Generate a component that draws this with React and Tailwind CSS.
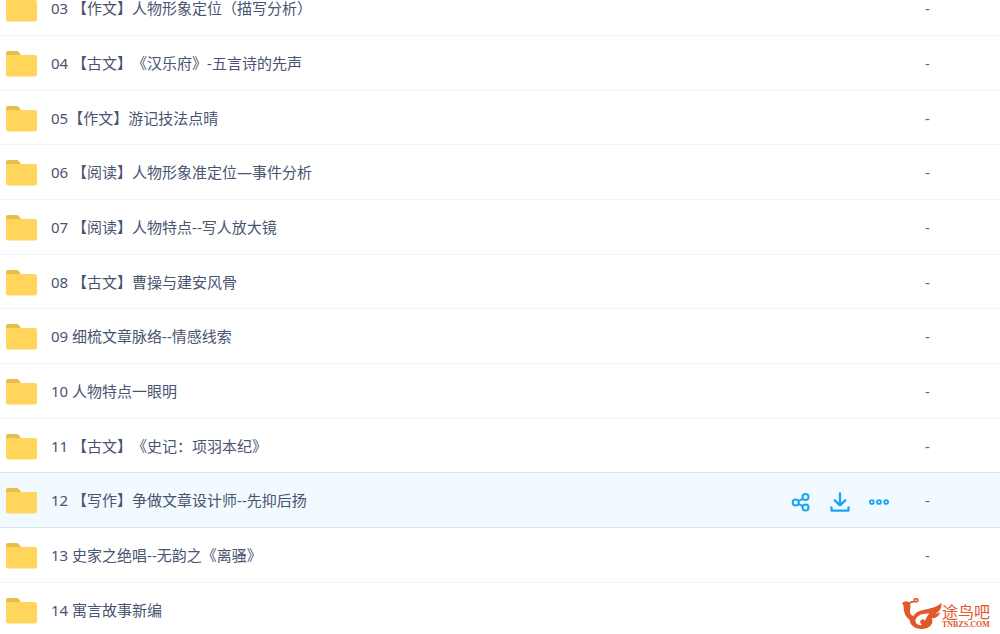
const files = [
  '03 【作文】人物形象定位（描写分析）',
  '04 【古文】《汉乐府》-五言诗的先声',
  '05【作文】游记技法点晴',
  '06 【阅读】人物形象准定位—事件分析',
  '07 【阅读】人物特点--写人放大镜',
  '08 【古文】曹操与建安风骨',
  '09 细梳文章脉络--情感线索',
  '10 人物特点一眼明',
  '11 【古文】《史记：项羽本纪》',
  '12 【写作】争做文章设计师--先抑后扬',
  '13 史家之绝唱--无韵之《离骚》',
  '14 寓言故事新编',
];

const activeIndex = 9;

function FolderIcon() {
  return (
    <svg viewBox="0 -2 31 28" className="h-7 w-[31px] shrink-0" aria-hidden="true">
      <path d="M0 2Q0 0 2 0H10.6Q12 0 12.8 1L14.6 3.6V10H0Z" fill="#e6be50" />
      <path d="M0 4H29Q31 4 31 6V23.500Q31 25.500 29 25.500H2Q0 25.500 0 23.500Z" fill="#ffd65b" />
    </svg>
  );
}

function ShareIcon() {
  return (
    <svg viewBox="0 0 20 20" className="size-5" fill="none" stroke="#19a5f5" strokeWidth="2" aria-hidden="true">
      <circle cx="4.700" cy="10.500" r="3" />
      <circle cx="14.500" cy="5" r="3" />
      <circle cx="14.500" cy="15.500" r="3" />
      <path d="M7.400 9.200 11.900 6.600M7.400 11.800 11.800 14.200" />
    </svg>
  );
}

function DownloadIcon() {
  return (
    <svg viewBox="0 0 20 20" className="size-5" fill="none" stroke="#19a5f5" strokeWidth="2.300" strokeLinecap="round" strokeLinejoin="round" aria-hidden="true">
      <path d="M10 1.300V13M4.800 8.300 10 13.300 15.200 8.300M1.500 15.500V18.600H18.500V15.500" />
    </svg>
  );
}

function MoreIcon() {
  return (
    <svg viewBox="0 0 20 20" className="size-5" fill="none" stroke="#19a5f5" strokeWidth="1.900" aria-hidden="true">
      <circle cx="2.800" cy="10" r="1.900" />
      <circle cx="10" cy="10" r="1.900" />
      <circle cx="17.200" cy="10" r="1.900" />
    </svg>
  );
}

function BirdLogo() {
  return (
    <svg viewBox="0 0 120 96" className="h-8 w-10" aria-hidden="true">
      <path
        fill="#e2572b"
        d="M0 17C5 10 13 8 20 12C28 17 25 28 24 38C23 46 27 51 34 54C42 42 52 38 66 35C86 31 106 27 118 14C120 29 113 41 101 46C107 47 111 45 115 42C111 55 101 61 89 61C97 76 84 92 62 93C38 94 24 81 23 66C11 57 5 44 5 29C5 22 4 18 0 17ZM82 47C62 44 43 53 40 67C40 78 49 84 60 81C54 77 53 70 57 66C62 62 68 64 69 69C72 60 76 52 82 47Z"
      />
      <path fill="none" stroke="#e2572b" strokeWidth="5" strokeLinecap="round" d="M23 16C25 10 31 13 36 11C41 9 34 5 39 3C44 1 50 4 47 9C45 12 42 12 40 10" />
    </svg>
  );
}

const actions = [
  { label: '分享', Icon: ShareIcon },
  { label: '下载', Icon: DownloadIcon },
  { label: '更多', Icon: MoreIcon },
];

function FileRow({ name, active }) {
  const tone = active
    ? 'border-[#cfe6f5] bg-[#f2faff]'
    : 'border-[#f3f5f8] group-has-[+tr[aria-selected=true]]:border-[#cfe6f5]';
  return (
    <tr aria-selected={active} className="group h-[55px] nth-[3n]:h-[54px]">
      <td className={`border-b p-0 pl-1.5 ${tone}`}>
        <a href="#" className="flex items-center gap-3.5">
          <FolderIcon />
          <span className="truncate">{name}</span>
        </a>
      </td>
      <td className={`border-b p-0 ${tone}`}>
        {active && (
          <div className="flex gap-[19px] pt-1">
            {actions.map(({ label, Icon }) => (
              <button key={label} type="button" aria-label={label} className="cursor-pointer">
                <Icon />
              </button>
            ))}
          </div>
        )}
      </td>
      <td className={`border-b p-0 text-[#5c6578] ${tone}`}>-</td>
    </tr>
  );
}

export default function App() {
  return (
    <main className="relative h-screen overflow-hidden bg-white font-['Noto_Sans','Noto_Sans_CJK_SC',sans-serif] text-[15px] leading-5 text-[#485470] [text-spacing-trim:space-all]">
      <table className="-mt-[19px] w-full table-fixed border-separate border-spacing-0">
        <colgroup>
          <col />
          <col className="w-[134px]" />
          <col className="w-[75px]" />
        </colgroup>
        <tbody>
          {files.map((name, i) => (
            <FileRow key={name} name={name} active={i === activeIndex} />
          ))}
        </tbody>
      </table>
      <div className="absolute right-2.5 bottom-1 flex items-end text-[#e2572b]">
        <BirdLogo />
        <div className="flex flex-col">
          <span className="text-base leading-4">途鸟吧</span>
          <span className="font-['Liberation_Serif',serif] text-[8px] leading-[10px] font-bold">TNBZS.COM</span>
        </div>
      </div>
    </main>
  );
}
